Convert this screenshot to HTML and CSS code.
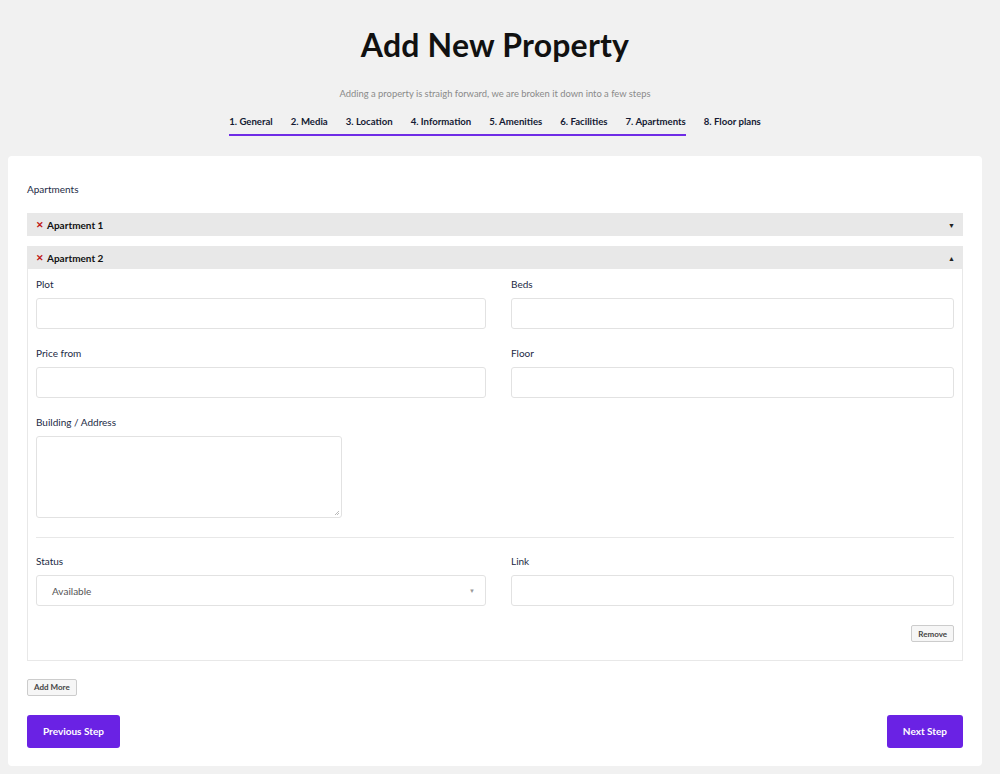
FILE: index.html
```html
<!DOCTYPE html>
<html>
<head>
<meta charset="utf-8">
<link rel="stylesheet" href="styles.css">
</head>
<body>
<header class="head">
  <h1 class="title">Add New Property</h1>
  <p class="subtitle">Adding a property is straigh forward, we are broken it down into a few steps</p>
  <nav class="tabs">
    <span class="tab done">1. General</span>
    <span class="tab done">2. Media</span>
    <span class="tab done">3. Location</span>
    <span class="tab done">4. Information</span>
    <span class="tab done">5. Amenities</span>
    <span class="tab done">6. Facilities</span>
    <span class="tab done">7. Apartments</span>
    <span class="tab">8. Floor plans</span>
  </nav>
</header>
<main class="card">
  <div class="section-label">Apartments</div>
  <div class="acc">
    <div class="acc-head"><span class="x">✕</span><span class="acc-title">Apartment 1</span><span class="caret">▼</span></div>
  </div>
  <div class="acc open">
    <div class="acc-head"><span class="x">✕</span><span class="acc-title">Apartment 2</span><span class="caret">▲</span></div>
    <div class="acc-body">
      <div class="grid">
        <div class="field"><label>Plot</label><div class="input"></div></div>
        <div class="field"><label>Beds</label><div class="input"></div></div>
        <div class="field"><label>Price from</label><div class="input"></div></div>
        <div class="field"><label>Floor</label><div class="input"></div></div>
      </div>
      <div class="field"><label>Building / Address</label><div class="textarea"><svg class="grip" width="6" height="6" viewBox="0 0 6 6"><path d="M5 1L1 5M5 3L3 5" stroke="#aaa" stroke-width="0.8"/></svg></div></div>
      <hr class="sep">
      <div class="grid">
        <div class="field"><label>Status</label><div class="input select"><span>Available</span><span class="sel-caret">▼</span></div></div>
        <div class="field"><label>Link</label><div class="input"></div></div>
      </div>
      <div class="remove-row"><button class="small-btn">Remove</button></div>
    </div>
  </div>
  <div class="add-row"><button class="small-btn">Add More</button></div>
  <div class="nav-row">
    <button class="primary">Previous Step</button>
    <button class="primary">Next Step</button>
  </div>
</main>
</body>
</html>
```
FILE: styles.css
```css
html, body { margin: 0; padding: 0; }
body {
  background: #f1f1f1;
  font-family: "Lato", "Open Sans", sans-serif;
  color: #1d2340;
  padding: 0 18px 8px 8px;
}
.head { text-align: center; padding-top: 26px; }
.title {
  margin: 0;
  font-size: 32px;
  font-weight: 700;
  color: #111;
  line-height: 38px;
  letter-spacing: 0.2px;
}
.subtitle {
  margin: 23px 0 0;
  font-size: 9.4px;
  color: #8a8a8a;
  line-height: 14px;
}
.tabs {
  display: flex;
  justify-content: center;
  gap: 18px;
  margin-top: 14px;
  height: 41px;
}
.tab {
  font-size: 9.6px;
  font-weight: 700;
  color: #141a33;
  line-height: 14px;
  padding-bottom: 5px;
  border-bottom: 2px solid transparent;
  height: 14px;
}
.tab.done { border-bottom-color: #6f2ce6; margin-right: -18px; padding-right: 18px; }
.tab.done:nth-child(7) { margin-right: 0; padding-right: 0; }
.card {
  background: #fff;
  border-radius: 4px;
  padding: 26px 19px 18px;
}
.section-label { font-size: 10px; color: #222a45; line-height: 14px; margin-bottom: 17px; }
.acc { margin-bottom: 10px; }
.acc-head {
  background: #e8e8e8;
  height: 23px;
  display: flex;
  align-items: center;
  padding: 0 8px 0 9px;
}
.x { color: #c01818; font-size: 9px; font-weight: 700; width: 11px; }
.acc-title { font-size: 10px; font-weight: 700; color: #111; flex: 1; }
.caret { font-size: 7px; color: #222; }
.acc-body {
  border: 1px solid #e8e8e8;
  border-top: none;
  padding: 8px 8px 18px;
}
.grid {
  display: grid;
  grid-template-columns: 450px 1fr;
  column-gap: 25px;
}
.field { margin-bottom: 17px; }
.field label {
  display: block;
  font-size: 10px;
  color: #222a45;
  line-height: 14px;
  margin-bottom: 7px;
}
.input {
  height: 29px;
  border: 1px solid #e2e2e2;
  border-radius: 3px;
  background: #fff;
  box-sizing: content-box;
}
.textarea {
  width: 304px;
  height: 80px;
  border: 1px solid #e2e2e2;
  border-radius: 3px;
  position: relative;
}
.grip { position: absolute; right: 1px; bottom: 1px; }
.sep { border: none; border-top: 1px solid #e8e8e8; margin: 19px 0 16px; }
.select {
  display: flex;
  align-items: center;
  justify-content: space-between;
  padding: 0 10px 0 15px;
  font-size: 10px;
  color: #555;
}
.sel-caret { font-size: 6px; color: #999; }
.remove-row { display: flex; justify-content: flex-end; margin-top: 2px; }
.small-btn {
  font-family: "Lato", sans-serif;
  font-size: 8px;
  font-weight: 700;
  color: #444;
  background: #f6f6f6;
  border: 1px solid #ccc;
  border-radius: 2px;
  height: 17px;
  padding: 0 6px;
}
.add-row { margin-top: 13px; }
.nav-row {
  display: flex;
  justify-content: space-between;
  margin-top: 19px;
}
.primary {
  font-family: "Lato", sans-serif;
  background: #6a22e4;
  color: #fff;
  border: none;
  border-radius: 3px;
  font-size: 10px;
  font-weight: 700;
  height: 33px;
  padding: 0 16px;
}
```
